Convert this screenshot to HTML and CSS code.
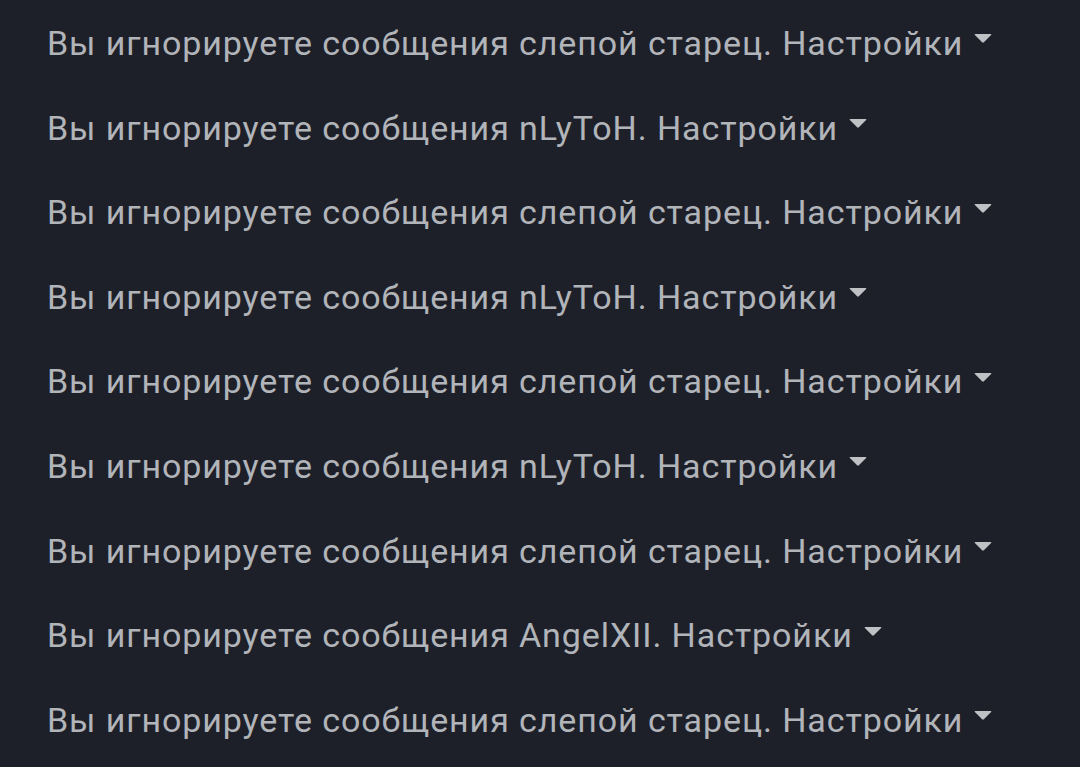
FILE: index.html
```html
<!DOCTYPE html>
<html lang="ru">
<head>
<meta charset="utf-8">
<link rel="stylesheet" href="styles.css">
</head>
<body>
<ul class="list">
  <li class="row">Вы игнорируете сообщения слепой старец. <span class="settings">Настройки<svg class="caret" viewBox="0 0 20 10"><path d="M1.5 0H18.5Q20 0 19 1.2L11 9.2Q10 10 9 9.2L1 1.2Q0 0 1.5 0Z"/></svg></span></li>
  <li class="row">Вы игнорируете сообщения nLyToH. <span class="settings">Настройки<svg class="caret" viewBox="0 0 20 10"><path d="M1.5 0H18.5Q20 0 19 1.2L11 9.2Q10 10 9 9.2L1 1.2Q0 0 1.5 0Z"/></svg></span></li>
  <li class="row">Вы игнорируете сообщения слепой старец. <span class="settings">Настройки<svg class="caret" viewBox="0 0 20 10"><path d="M1.5 0H18.5Q20 0 19 1.2L11 9.2Q10 10 9 9.2L1 1.2Q0 0 1.5 0Z"/></svg></span></li>
  <li class="row">Вы игнорируете сообщения nLyToH. <span class="settings">Настройки<svg class="caret" viewBox="0 0 20 10"><path d="M1.5 0H18.5Q20 0 19 1.2L11 9.2Q10 10 9 9.2L1 1.2Q0 0 1.5 0Z"/></svg></span></li>
  <li class="row">Вы игнорируете сообщения слепой старец. <span class="settings">Настройки<svg class="caret" viewBox="0 0 20 10"><path d="M1.5 0H18.5Q20 0 19 1.2L11 9.2Q10 10 9 9.2L1 1.2Q0 0 1.5 0Z"/></svg></span></li>
  <li class="row">Вы игнорируете сообщения nLyToH. <span class="settings">Настройки<svg class="caret" viewBox="0 0 20 10"><path d="M1.5 0H18.5Q20 0 19 1.2L11 9.2Q10 10 9 9.2L1 1.2Q0 0 1.5 0Z"/></svg></span></li>
  <li class="row">Вы игнорируете сообщения слепой старец. <span class="settings">Настройки<svg class="caret" viewBox="0 0 20 10"><path d="M1.5 0H18.5Q20 0 19 1.2L11 9.2Q10 10 9 9.2L1 1.2Q0 0 1.5 0Z"/></svg></span></li>
  <li class="row">Вы игнорируете сообщения AngelXII. <span class="settings">Настройки<svg class="caret" viewBox="0 0 20 10"><path d="M1.5 0H18.5Q20 0 19 1.2L11 9.2Q10 10 9 9.2L1 1.2Q0 0 1.5 0Z"/></svg></span></li>
  <li class="row">Вы игнорируете сообщения слепой старец. <span class="settings">Настройки<svg class="caret" viewBox="0 0 20 10"><path d="M1.5 0H18.5Q20 0 19 1.2L11 9.2Q10 10 9 9.2L1 1.2Q0 0 1.5 0Z"/></svg></span></li>
</ul>
</body>
</html>
```

FILE: styles.css
```css
html, body {
  margin: 0;
  padding: 0;
  background: #1e2029;
  height: 100%;
  overflow: hidden;
}
.list {
  list-style: none;
  margin: 0;
  padding: 1px 0 0 47px;
  font-family: Roboto, "Noto Sans", sans-serif;
  font-size: 34px;
  letter-spacing: 0.9px;
  color: #b1b4b9;
}
.row {
  height: 84.6px;
  line-height: 84.6px;
  white-space: nowrap;
}
.settings {
  white-space: nowrap;
}
.caret {
  width: 18px;
  height: 9px;
  margin-left: 11px;
  fill: #bfc1c5;
  vertical-align: 0.34em;
}
```
